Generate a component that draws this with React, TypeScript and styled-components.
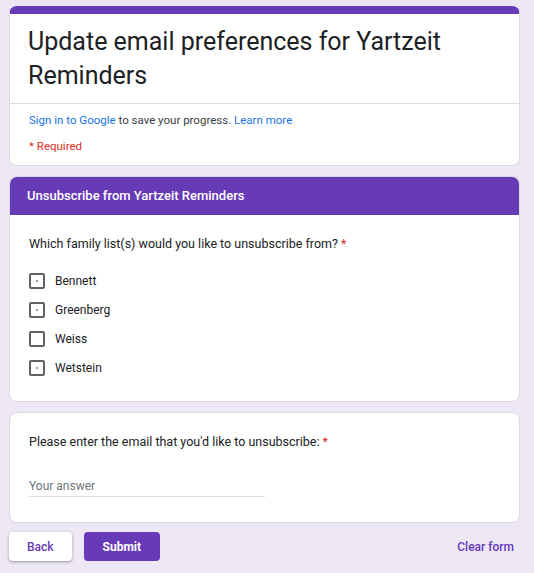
import React, { FC } from "react";
import styled, { createGlobalStyle } from "styled-components";

const purple = "#673ab7";

const GlobalStyle = createGlobalStyle`
  body {
    margin: 0;
    background: #ede7f6;
    font-family: Roboto, "Liberation Sans", Arial, sans-serif;
    color: #202124;
  }
`;

const Page = styled.div`
  width: 511px;
  padding: 6px 0 12px 9px;
  display: flex;
  flex-direction: column;
  gap: 10px;
`;

const Card = styled.div`
  background: #fff;
  border: 1px solid #dadce0;
  border-radius: 8px;
  overflow: hidden;
`;

const HeaderCard = styled(Card)`
  border-top: 8px solid ${purple};
`;

const Title = styled.h1`
  margin: 0;
  padding: 11px 19px 10px 18px;
  font-size: 25px;
  font-weight: 400;
  line-height: 34px;
  border-bottom: 1px solid #dadce0;
`;

const HeaderInfo = styled.div`
  padding: 8px 19px 11px;
  display: flex;
  flex-direction: column;
  gap: 10px;
  font-size: 11.5px;
  line-height: 16px;
  color: #3c4043;
`;

const Link = styled.a`
  color: #1a73e8;
  text-decoration: none;
`;

const Required = styled.div`
  color: #d93025;
`;

const SectionHeader = styled.div`
  background: ${purple};
  color: #fff;
  font-size: 13px;
  font-weight: 500;
  line-height: 39px;
  height: 39px;
  padding: 0 18px;
  margin: -1px -1px 0;
`;

const SectionBody = styled.div<{ $top: number; $bottom: number }>`
  padding: ${(p) => p.$top}px 19px ${(p) => p.$bottom}px;
`;

const Question = styled.div`
  font-size: 12.5px;
  line-height: 20px;
`;

const Star = styled.span`
  color: #d93025;
`;

const Options = styled.div`
  margin-top: 12px;
  display: flex;
  flex-direction: column;
`;

const Option = styled.label`
  height: 29px;
  display: flex;
  align-items: center;
  gap: 10px;
  font-size: 12px;
`;

const Box = styled.span<{ $dot: boolean }>`
  width: 12px;
  height: 12px;
  border: 2px solid #5f6368;
  border-radius: 2px;
  position: relative;
  flex: none;
  &::after {
    content: "";
    display: ${(p) => (p.$dot ? "block" : "none")};
    position: absolute;
    left: 5px;
    top: 5px;
    width: 2px;
    height: 2px;
    background: #9aa0a6;
  }
`;

const Answer = styled.div`
  margin-top: 26px;
  width: 236px;
  border-bottom: 1px solid #dadce0;
  font-size: 12px;
  line-height: 16px;
  padding-bottom: 2px;
  color: #70757a;
`;

const Actions = styled.div`
  display: flex;
  align-items: center;
  gap: 12px;
  padding-right: 6px;
  margin-top: -1px;
`;

const Button = styled.button<{ $primary?: boolean }>`
  height: 29px;
  padding: 0 ${(p) => (p.$primary ? 19 : 18)}px;
  border: none;
  border-radius: 4px;
  font-family: inherit;
  font-size: 12px;
  font-weight: ${(p) => (p.$primary ? 700 : 500)};
  background: ${(p) => (p.$primary ? purple : "#fff")};
  color: ${(p) => (p.$primary ? "#fff" : purple)};
  box-shadow: ${(p) =>
    p.$primary ? "none" : "0 1px 2px rgba(60,64,67,.3), 0 1px 3px 1px rgba(60,64,67,.15)"};
`;

const ClearForm = styled.span`
  margin-left: auto;
  color: ${purple};
  font-size: 12px;
  font-weight: 500;
`;

const families = [
  { name: "Bennett", dot: true },
  { name: "Greenberg", dot: true },
  { name: "Weiss", dot: false },
  { name: "Wetstein", dot: true },
];

const App: FC = () => {
  return (
    <>
      <GlobalStyle />
      <Page>
        <HeaderCard>
          <Title>Update email preferences for Yartzeit Reminders</Title>
          <HeaderInfo>
            <div>
              <Link>Sign in to Google</Link> to save your progress.{" "}
              <Link>Learn more</Link>
            </div>
            <Required>* Required</Required>
          </HeaderInfo>
        </HeaderCard>

        <Card>
          <SectionHeader>Unsubscribe from Yartzeit Reminders</SectionHeader>
          <SectionBody $top={19} $bottom={19}>
            <Question>
              Which family list(s) would you like to unsubscribe from? <Star>*</Star>
            </Question>
            <Options>
              {families.map((f) => (
                <Option key={f.name}>
                  <Box $dot={f.dot} />
                  {f.name}
                </Option>
              ))}
            </Options>
          </SectionBody>
        </Card>

        <Card>
          <SectionBody $top={19} $bottom={25}>
            <Question>
              Please enter the email that you'd like to unsubscribe: <Star>*</Star>
            </Question>
            <Answer>Your answer</Answer>
          </SectionBody>
        </Card>

        <Actions>
          <Button>Back</Button>
          <Button $primary>Submit</Button>
          <ClearForm>Clear form</ClearForm>
        </Actions>
      </Page>
    </>
  );
};

export default App;
